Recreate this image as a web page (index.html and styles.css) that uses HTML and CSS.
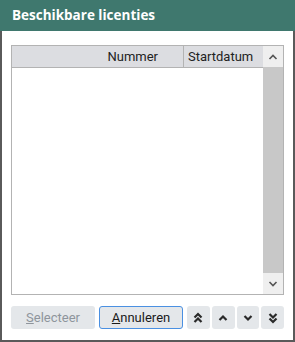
FILE: index.html
```html
<!DOCTYPE html>
<html lang="nl">
<head>
    <meta charset="UTF-8">
    <meta name="viewport" content="width=device-width, initial-scale=1.0">
    <title>Beschikbare licenties</title>
    <link rel="stylesheet" href="styles.css">
</head>
<body>
    <div class="dialog">
        <div class="titlebar">Beschikbare licenties</div>
        <div class="content">
            <div class="grid">
                <div class="grid-main">
                    <div class="grid-head">
                        <div class="col col-nummer">Nummer</div>
                        <div class="col col-start">Startdatum</div>
                    </div>
                    <div class="grid-body"></div>
                </div>
                <div class="scrollbar">
                    <div class="sb-btn">
                        <svg width="10" height="6" viewBox="0 0 10 6"><path d="M1.5 5 L5 1.5 L8.5 5" fill="none" stroke="#555" stroke-width="1.6"/></svg>
                    </div>
                    <div class="sb-thumb"></div>
                    <div class="sb-btn">
                        <svg width="10" height="6" viewBox="0 0 10 6"><path d="M1.5 1 L5 4.5 L8.5 1" fill="none" stroke="#555" stroke-width="1.6"/></svg>
                    </div>
                </div>
            </div>
            <div class="buttons">
                <button class="btn btn-wide" disabled><u>S</u>electeer</button>
                <button class="btn btn-wide btn-focus"><u>A</u>nnuleren</button>
                <button class="btn btn-icon">
                    <svg width="10" height="12" viewBox="0 0 10 12"><path d="M1.5 5.5 L5 2 L8.5 5.5 M1.5 10 L5 6.5 L8.5 10" fill="none" stroke="#2a2a2a" stroke-width="2.2"/></svg>
                </button>
                <button class="btn btn-icon">
                    <svg width="10" height="8" viewBox="0 0 10 8"><path d="M1.5 6 L5 2.5 L8.5 6" fill="none" stroke="#2a2a2a" stroke-width="2.2"/></svg>
                </button>
                <button class="btn btn-icon">
                    <svg width="10" height="8" viewBox="0 0 10 8"><path d="M1.5 2 L5 5.5 L8.5 2" fill="none" stroke="#2a2a2a" stroke-width="2.2"/></svg>
                </button>
                <button class="btn btn-icon">
                    <svg width="10" height="12" viewBox="0 0 10 12"><path d="M1.5 2 L5 5.5 L8.5 2 M1.5 6.5 L5 10 L8.5 6.5" fill="none" stroke="#2a2a2a" stroke-width="2.2"/></svg>
                </button>
            </div>
        </div>
    </div>
</body>
</html>
```

FILE: styles.css
```css
body {
    margin: 0;
    padding: 0;
    font-family: Roboto, sans-serif;
    background-color: white;
}

.dialog {
    width: 295px;
    height: 342px;
    box-sizing: border-box;
    border: 2px solid #5a5a5a;
    border-top: none;
    display: flex;
    flex-direction: column;
}

.titlebar {
    height: 31px;
    margin: 0 -2px;
    background-color: #3f786e;
    color: white;
    font-family: "Open Sans", sans-serif;
    font-weight: bold;
    font-size: 13.5px;
    line-height: 30px;
    padding-left: 12px;
}

.content {
    flex: 1;
    padding: 14px 9px 0 9px;
    display: flex;
    flex-direction: column;
}

.grid {
    height: 248px;
    border: 1px solid #b3b3b3;
    display: flex;
}

.grid-main {
    flex: 1;
    display: flex;
    flex-direction: column;
}

.grid-head {
    height: 21px;
    background-color: #dcdde1;
    border-bottom: 1px solid #b3b3b3;
    display: flex;
    font-size: 13px;
    color: #222;
}

.col {
    line-height: 21px;
}

.col-nummer {
    width: 146px;
    text-align: right;
    padding-right: 25px;
    border-right: 1px solid #b3b3b3;
}

.col-start {
    flex: 1;
    padding-left: 4px;
}

.grid-body {
    flex: 1;
}

.scrollbar {
    width: 20px;
    background-color: #efefef;
    display: flex;
    flex-direction: column;
}

.sb-btn {
    height: 21px;
    display: flex;
    align-items: center;
    justify-content: center;
}

.sb-thumb {
    flex: 1;
    background-color: #c8c8c8;
}

.buttons {
    display: flex;
    margin-top: 11px;
    gap: 2px;
}

.btn {
    height: 23px;
    border: 1px solid transparent;
    border-radius: 3px;
    background-color: #e4e7ea;
    font-family: Roboto, sans-serif;
    font-size: 13px;
    color: #1a1a1a;
    padding: 0;
    display: flex;
    align-items: center;
    justify-content: center;
}

.btn-wide {
    width: 85px;
    margin-right: 2px;
}

.btn[disabled] {
    color: #8e959c;
}

.btn-focus {
    border-color: #4a90e2;
}

.btn-icon {
    width: 23px;
}
```
